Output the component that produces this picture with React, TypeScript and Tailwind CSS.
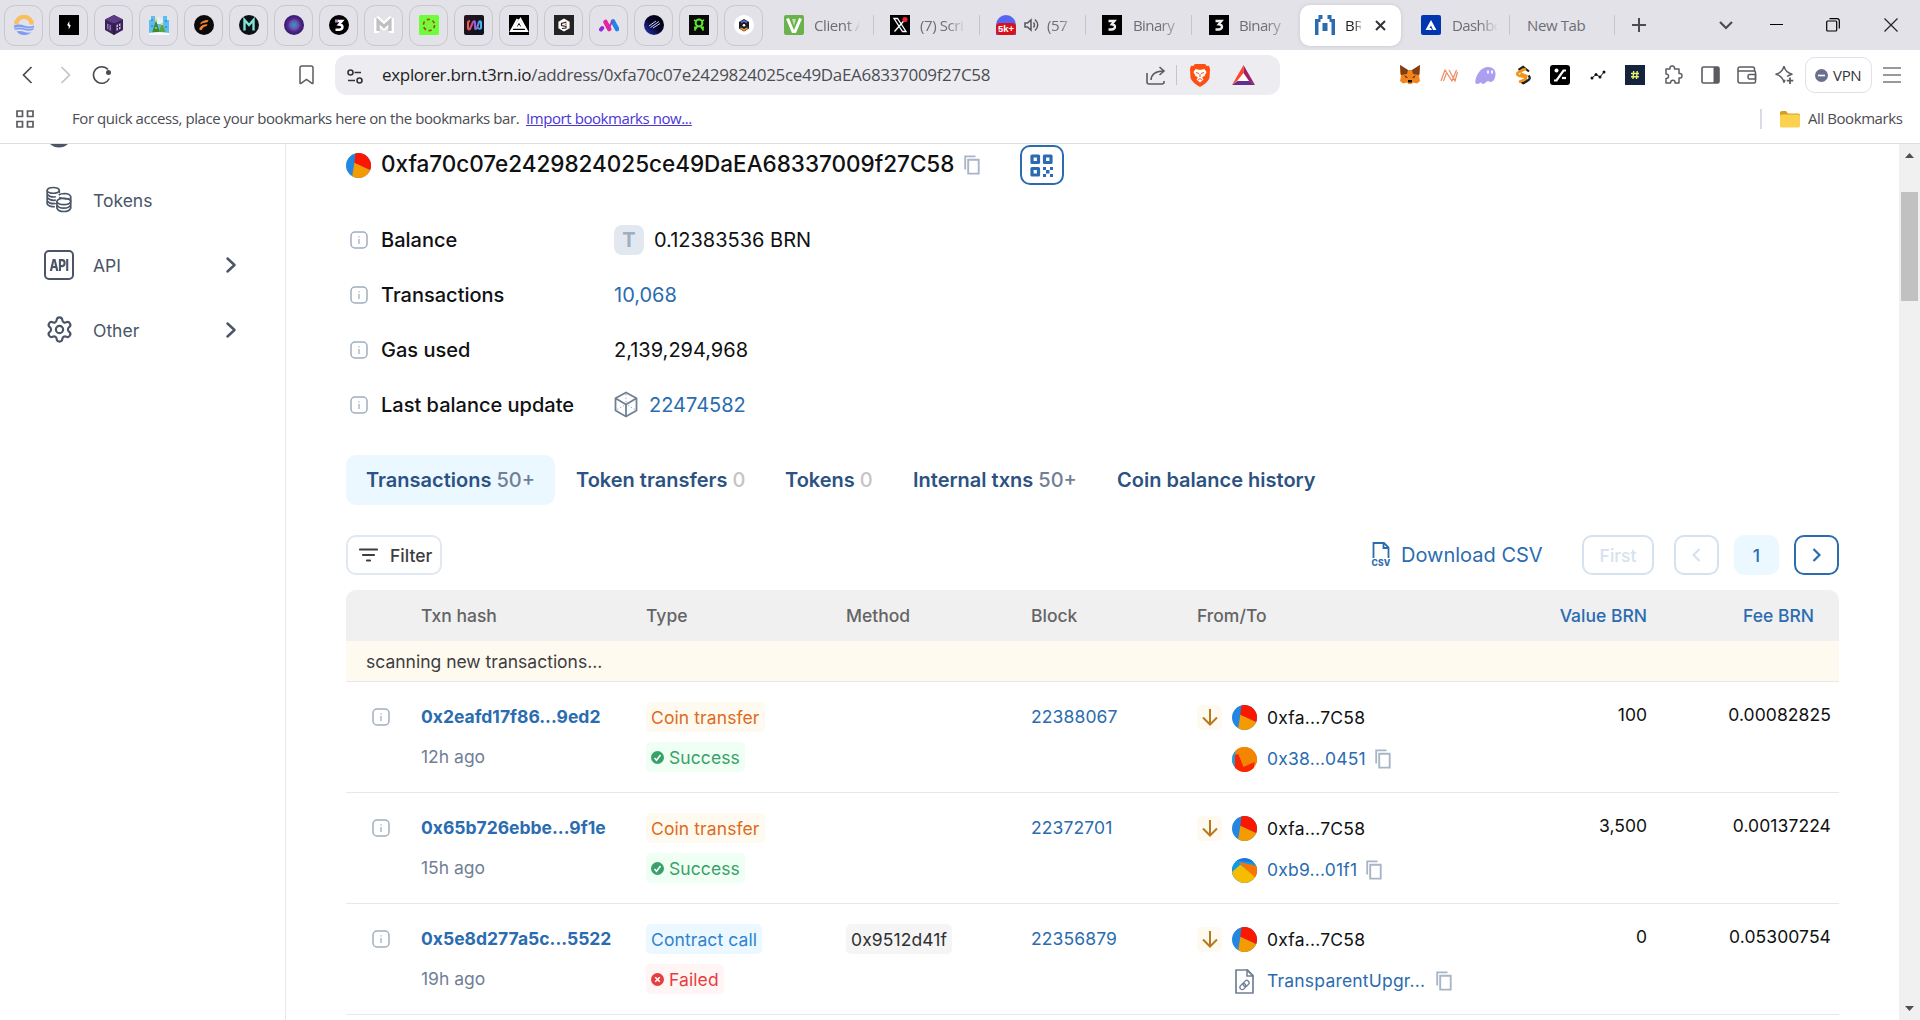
import React from "react";
import { Settings } from "lucide-react";

type P = { className?: string };

const Svg = ({ w, h, vb, children, className = "" }: { w: number; h: number; vb?: string; children: React.ReactNode; className?: string }) => (
  <svg width={w} height={h} viewBox={vb ?? `0 0 ${w} ${h}`} fill="none" className={`block shrink-0 ${className}`}>
    {children}
  </svg>
);

/* ---------- favicons of the pinned tabs ---------- */
const pinned: React.ReactNode[] = [
  <>
    <path d="M0 9.500a10 10 0 0 1 20 0h-4.500a5.500 5.500 0 0 0-11 0z" fill="#f7bf63" />
    <path d="M0 10.500q5-2 10 0t10 0q0 3-1 4.500-4.500 1.500-9 0t-9 0q-1-2-1-4.500zM2.500 16.500q4-1 8 .5t7 0A10 10 0 0 1 2.500 16.500z" fill="#7c9df3" />
    <path d="M1 13q4-1.600 9 0t9 0" stroke="#c3d2fb" strokeWidth="1" />
  </>,
  <>
    <path d="M0 0h20v20H0z" fill="#000" />
    <path d="M10.300 6v3.200l1.500 1.300L9.700 14.500v-3L8.200 10z" fill="#fff" />
  </>,
  <>
    <path d="M10 0l9 4.500v10.500L10 20 1 15V4.500z" fill="#3b2359" />
    <path d="M10 0l9 4.500-9 4-9-4z" fill="#5d3d85" />
    <path d="M10 8.500V20" stroke="#241238" />
    <path d="M12.500 10l4-1.800v5.600l-4 2z" fill="#c9bfe0" />
    <path d="M3 8.500l4 1.800v5.400l-4-2z" fill="#8b76b1" />
    <path d="M14.500 9v6M12.500 13l4-2M5 9.500v5" stroke="#3b2359" />
  </>,
  <>
    <path d="M0 18V5h2V1h4v4h8V1h4v4h2v13z" fill="#5dbdf3" />
    <path d="M6 5l4-3 4 3v4H6z" fill="#dff2fd" />
    <path d="M2 5h2M16 6h2M2 11h2M16 12h2" stroke="#2a8de0" strokeWidth="1.500" />
    <path d="M7 5l4 13H3z" fill="#3c8b2f" />
    <path d="M13 8l4 10H9.500z" fill="#5ba53a" />
    <circle cx="7" cy="5" r="1.200" fill="#ffd33c" />
    <circle cx="13" cy="9" r="1.200" fill="#ffd33c" />
    <circle cx="7" cy="13" r="1" fill="#f0c23c" />
    <path d="M0 18q10-2 20 0v2H0z" fill="#f4fafe" />
  </>,
  <>
    <circle cx="10" cy="10" r="10" fill="#0a0a0a" />
    <path d="M6 9.500Q7 5 14.500 5l-1 2.200Q8.500 7.500 6 9.500zM5.500 13q2-4 8-3.800l-1 2Q9 11.200 7.800 15H5.500z" fill="#f5822a" />
  </>,
  <>
    <circle cx="10" cy="10" r="10" fill="#0c1116" />
    <path d="M5.500 15.500V5l4.500 5 4.500-5v10.500" stroke="#7fe3d4" strokeWidth="2.400" />
  </>,
  <>
    <defs>
      <radialGradient id="orb">
        <stop offset="0" stopColor="#20a5bd" />
        <stop offset=".45" stopColor="#6b4fb0" />
        <stop offset=".6" stopColor="#5b2a93" />
        <stop offset="1" stopColor="#2c1a66" />
      </radialGradient>
    </defs>
    <circle cx="10" cy="10" r="10" fill="url(#orb)" />
  </>,
  <>
    <circle cx="10" cy="10" r="10" fill="#000" />
    <path d="M6 6h7l-3 3.500q3.500.2 3.500 2.600T10.200 14.800H6.500" stroke="#fff" strokeWidth="2.400" />
    <path d="M6 6h3" stroke="#c77be8" strokeWidth="2.400" />
  </>,
  <>
    <path d="M0 18V4l4-3 6 5 6-5 4 3v14h-5v-6l-5 4-5-4v6z" fill="#fff" />
    <path d="M4 16V6l6 5.500L16 6v10" stroke="#c0c0c4" strokeWidth="3.200" />
  </>,
  <>
    <rect width="20" height="20" rx="1.500" fill="#6dfd3a" />
    <circle cx="10" cy="10" r="5.600" stroke="#a44a12" strokeWidth="1.600" strokeDasharray="3.200 2.660" />
    <circle cx="10" cy="10" r="3" stroke="#9be03a" />
  </>,
  <>
    <defs>
      <linearGradient id="wave" x1="0" x2="1" y1="0" y2="0">
        <stop offset="0" stopColor="#f15a3c" />
        <stop offset=".45" stopColor="#a04fd0" />
        <stop offset="1" stopColor="#3fb8ee" />
      </linearGradient>
      <linearGradient id="wavebg" x1="0" x2="1" y1="0" y2="1">
        <stop offset="0" stopColor="#2b1420" />
        <stop offset="1" stopColor="#07131c" />
      </linearGradient>
    </defs>
    <rect width="20" height="20" rx="2" fill="url(#wavebg)" />
    <path d="M6 6q-2 0-2 2v5q0 2 2 1l3-7q2-2 2 1v5q0 2 2 0l2-6q1-1.500 2 0v6q-1 1.500-3 0" stroke="url(#wave)" strokeWidth="2.100" />
  </>,
  <>
    <path d="M0 0h20v20H0z" fill="#000" />
    <path d="M8.500 4L2 16h16L11.500 4 9.500 7.500M6 12.800l4-7 4 7z" stroke="#fff" strokeWidth="2" />
    <circle cx="10" cy="11.500" r="1.500" fill="#fff" />
  </>,
  <>
    <path d="M0 0h20v20H0z" fill="#242424" />
    <path d="M10 3.500l5.600 3.200v6.600L10 16.500l-5.600-3.200V6.700z" fill="#fff" />
    <path d="M12.500 7L7.500 8.500v2l4.500 1V13l-4 .5" stroke="#242424" strokeWidth="1.200" />
    <path d="M10.500 9l2-1v3z" fill="#f04e23" />
  </>,
  <>
    <path d="M2 14.500l1.200-1.500" stroke="#8a2be2" strokeWidth="4" strokeLinecap="round" />
    <path d="M6.500 7l3.700 7" stroke="#e6249c" strokeWidth="4.600" strokeLinecap="round" />
    <path d="M14 6.500l4 7.500" stroke="#1f86e8" strokeWidth="4.600" strokeLinecap="round" />
    <path d="M9 14l4.500-8" stroke="#c32bb0" strokeWidth="2" />
  </>,
  <>
    <defs>
      <linearGradient id="night" x1="0" x2="1" y1="1" y2="0">
        <stop offset="0" stopColor="#2b35c9" />
        <stop offset=".5" stopColor="#06062a" />
        <stop offset="1" stopColor="#000" />
      </linearGradient>
    </defs>
    <circle cx="10" cy="10" r="10" fill="url(#night)" />
    <path d="M5 11l7-5M6.500 12.500l8.500-6M9 13l7-4.500" stroke="#cdd2f5" strokeWidth="1" />
  </>,
  <>
    <path d="M0 0h20v20H0z" fill="#0a0a0a" />
    <circle cx="10" cy="8" r="3.400" stroke="#5fe62f" strokeWidth="2" />
    <path d="M5.500 15.500L8.500 11M14.500 15.500L11.500 11M5 5l2 1M15 5l-2 1M5 12.500h3M15 12.500h-3" stroke="#5fe62f" strokeWidth="1.800" />
  </>,
  <>
    <circle cx="10" cy="10" r="10" fill="#fff" />
    <path d="M10 4l5 3v6.500l-5 3-5-3V7z" fill="#1b1b28" />
    <path d="M7 7.500l3-1.700 3 1.700" stroke="#6a6fe0" strokeWidth="1.500" />
    <circle cx="10" cy="10.300" r="1.300" fill="#fff" />
    <path d="M6.500 13l3.500 2 3.500-2" stroke="#f39a1e" strokeWidth="1.600" />
  </>,
];

/* ---------- page icons ---------- */
const Info = ({ className = "" }: P) => (
  <Svg w={18} h={18} className={className}>
    <rect x="1" y="1" width="16" height="16" rx="4" stroke="#a0aec0" strokeWidth="1.500" />
    <path d="M9 8v5M9 5.200v1.200" stroke="#a0aec0" strokeWidth="1.300" />
  </Svg>
);

const Copy = ({ className = "" }: P) => (
  <Svg w={16} h={20} className={className}>
    <path d="M1.200 14.500V1.400H11.500" stroke="#a8b5c6" strokeWidth="1.800" />
    <path d="M4.200 4.800h10.500v13.800H4.200z" stroke="#a8b5c6" strokeWidth="1.900" />
  </Svg>
);

const Avatar = ({ kind, className = "" }: P & { kind: number }) => (
  <div className={`size-[25px] shrink-0 overflow-hidden rounded-full ${className}`}>
    <Svg w={25} h={25}>
      {kind === 0 && (
        <>
          <path d="M0 0h25v25H0z" fill="#2386e1" />
          <path d="M9.500 0H25v17.500L8.300 10z" fill="#fb1700" />
          <path d="M8.300 9.800L25 17.500V25H6z" fill="#f39b00" />
        </>
      )}
      {kind === 1 && (
        <>
          <path d="M0 0h25v25H0z" fill="#f28602" />
          <path d="M0 0h4v25H0z" fill="#18a5e8" />
          <path d="M3.500 0H25v16L11 20.500 3.500 7z" fill="#f28602" />
          <path d="M2.800 8l3.500-1L11.500 20l11-5-1 10H2.800z" fill="#fa2400" />
        </>
      )}
      {kind === 2 && (
        <>
          <path d="M0 0h25v25H0z" fill="#1f72e5" />
          <path d="M0 2l25 3v5L0 22z" fill="#0f9be8" />
          <path d="M7 4l18 4v15z" fill="#fc7400" />
          <path d="M0 14L8.500 6.500 25 21v4H0z" fill="#f5bc00" />
        </>
      )}
    </Svg>
  </div>
);

const Sep = ({ className = "" }: P) => <div className={`h-5 w-px shrink-0 bg-[#c5c5cb] ${className}`} />;

const Three = () => (
  <Svg w={20} h={20}>
    <path d="M0 0h20v20H0z" fill="#000" />
    <path d="M6.500 6h6L9.800 9.300q3.200.2 3.200 2.500t-3 2.700H6.500" stroke="#eee" strokeWidth="2.300" />
  </Svg>
);

const TabText = ({ children, className = "" }: P & { children: React.ReactNode }) => (
  <span className={`block shrink-0 overflow-hidden whitespace-nowrap text-[15px] leading-5 tracking-[-0.4px] text-[#6d6e74] ${className}`}>{children}</span>
);

function TabStrip() {
  return (
    <div className="flex h-[50px] shrink-0 items-center bg-[#e3e2e8] pl-1">
      <div className="flex w-[780px] shrink-0 gap-[6px]">
        {pinned.map((icon, i) => (
          <div key={i} className="flex h-[41px] w-[39px] shrink-0 items-center justify-center rounded-[11px] border border-[#c8c8cd]">
            <Svg w={20} h={20}>{icon}</Svg>
          </div>
        ))}
      </div>
      <div className="flex w-[89px] shrink-0 items-center">
        <Svg w={20} h={20}>
          <rect width="20" height="20" rx="2" fill="#69b24c" />
          <path d="M3.500 3.500L9 16.500h2l5.500-13" stroke="#fff" strokeWidth="3" />
          <path d="M8 4h4l-2 7z" fill="#b9e3a8" />
        </Svg>
        <TabText className="ml-[10px] w-[46px] [mask-image:linear-gradient(to_right,#000_70%,transparent)]">Client A</TabText>
      </div>
      <Sep />
      <div className="flex w-[105px] shrink-0 items-center pl-4">
        <Svg w={20} h={20}>
          <path d="M0 0h20v20H0z" fill="#000" />
          <path d="M4 3.500h3.500L16 16.500h-3.500zM15.500 4L4.500 16.500" stroke="#fff" strokeWidth="1.300" />
          <circle cx="15" cy="4.500" r="2.600" fill="#f4212e" />
        </Svg>
        <TabText className="ml-[10px] w-[46px] [mask-image:linear-gradient(to_right,#000_60%,transparent)]">(7) Scri</TabText>
      </div>
      <Sep />
      <div className="flex w-[105px] shrink-0 items-center pl-4">
        <div className="flex h-5 w-5 flex-col justify-end rounded-t-full bg-[#5865f2]">
          <span className="flex h-[12px] items-center justify-center rounded-[4px] bg-[#d8121a] font-['Liberation_Sans'] text-[9.5px] font-bold leading-none text-white">5k+</span>
        </div>
        <Svg w={15} h={14} className="ml-2">
          <path d="M1 5h2.500L7 2v10L3.500 9H1z" stroke="#55565c" strokeWidth="1.500" />
          <path d="M9.500 4.500q2 2.500 0 5M11 1.500q5.500 5.500 0 11" stroke="#55565c" strokeWidth="1.400" />
        </Svg>
        <TabText className="ml-[8px] w-[22px] [mask-image:linear-gradient(to_right,#000_60%,rgba(0,0,0,.4))]">(57</TabText>
      </div>
      <Sep />
      <div className="flex w-[105px] shrink-0 items-center pl-4">
        <Three />
        <TabText className="ml-[11px] w-[44px] tracking-[-0.6px] [mask-image:linear-gradient(to_right,#000_60%,rgba(0,0,0,.4))]">Binary</TabText>
      </div>
      <Sep />
      <div className="flex w-[108px] shrink-0 items-center pl-[17px]">
        <Three />
        <TabText className="ml-[10px] w-[44px] tracking-[-0.6px] [mask-image:linear-gradient(to_right,#000_60%,rgba(0,0,0,.4))]">Binary</TabText>
      </div>
      <div className="flex h-[41px] w-[101px] shrink-0 items-center rounded-[10px] bg-white pl-[15px] shadow-[0_0_4px_rgba(0,0,0,.12)]">
        <Svg w={20} h={20}>
          <path d="M0 4h3.500v16H0zM16.500 4H20v16h-3.500zM3.500 0h4v4h-4zM12.500 0h4v4h-4zM7.500 8h5v8h-5zM3.500 4h2v3h-2zM14.500 4h2v3h-2z" fill="#2b6cb0" />
        </Svg>
        <TabText className="ml-[10px] w-[16px] !text-[#222] [mask-image:linear-gradient(to_right,#000_50%,rgba(0,0,0,.3))]">BRN</TabText>
        <Svg w={11} h={11} className="ml-[14px]">
          <path d="M1 1l9 9M10 1l-9 9" stroke="#333439" strokeWidth="2" />
        </Svg>
      </div>
      <div className="flex w-[108px] shrink-0 items-center pl-[20px]">
        <Svg w={20} h={20}>
          <rect width="20" height="20" rx="2" fill="#0036b0" />
          <path d="M10 5l5.500 10H12l-2-4.500 -1.500 2.500h1.500l1 2H4.500z" fill="#fff" />
        </Svg>
        <TabText className="ml-[11px] w-[46px] tracking-[-0.6px] [mask-image:linear-gradient(to_right,#000_60%,transparent)]">Dashboard</TabText>
      </div>
      <Sep />
      <TabText className="w-[104px] pl-[17px]">New Tab</TabText>
      <Sep />
      <Svg w={14} h={14} className="ml-[17px]">
        <path d="M7 0v14M0 7h14" stroke="#4b4c52" strokeWidth="2" />
      </Svg>
      <Svg w={14} h={9} className="ml-[73px]">
        <path d="M1 1l6 6 6-6" stroke="#4b4c52" strokeWidth="2.200" />
      </Svg>
      <div className="mb-px ml-[37px] h-px w-[13px] shrink-0 bg-black" />
      <Svg w={14} h={14} className="ml-[43px]">
        <rect x=".7" y="3" width="10" height="10" rx="1" stroke="#000" strokeWidth="1.200" />
        <path d="M3.500.7H11q2.300 0 2.300 2.300v7.500" stroke="#000" strokeWidth="1.200" />
      </Svg>
      <Svg w={14} h={14} className="ml-[44px]">
        <path d="M.5.5l13 13M13.500.5l-13 13" stroke="#222" strokeWidth="1.200" />
      </Svg>
    </div>
  );
}

function Toolbar() {
  return (
    <div className="flex h-[50px] shrink-0 items-center bg-white pl-[22px]">
      <Svg w={11} h={18}><path d="M9.500 1L1.500 9l8 8" stroke="#4b4c52" strokeWidth="1.700" /></Svg>
      <Svg w={11} h={18} className="ml-[27px]"><path d="M1.500 1l8 8-8 8" stroke="#c4c4c8" strokeWidth="1.700" /></Svg>
      <Svg w={20} h={20} className="ml-[21px]">
        <path d="M17.300 13.500A8.300 8.300 0 1 1 16 4.500" stroke="#4b4c52" strokeWidth="1.600" />
        <circle cx="16.500" cy="7.500" r="2.500" fill="#4b4c52" />
      </Svg>
      <Svg w={15} h={20} className="ml-[187px]">
        <path d="M1 3q0-2 2-2h9q2 0 2 2v15q0 1-1 .4L7.500 14.500 2 18.400q-1 .6-1-.4z" stroke="#5b5c62" strokeWidth="1.500" />
      </Svg>
      <div className="ml-[21px] flex h-10 w-[945px] shrink-0 items-center rounded-[12px] bg-[#ededf1] pl-[12px] text-[17px]">
        <Svg w={17} h={15} className="mt-[3px]">
          <circle cx="3.500" cy="3.500" r="2.500" stroke="#333439" strokeWidth="1.600" />
          <path d="M7.500 3.500H14M1 11.500h7" stroke="#333439" strokeWidth="1.600" />
          <circle cx="12.500" cy="11.500" r="2.500" stroke="#333439" strokeWidth="1.600" />
        </Svg>
        <span className="-mt-px ml-[18px] w-[764px] whitespace-nowrap tracking-[-0.32px] text-[#4c4d53]">
          <span className="text-[#1d1e22]">explorer.brn.t3rn.io</span>/address/0xfa70c07e2429824025ce49DaEA68337009f27C58
        </span>
        <Svg w={20} h={19}>
          <path d="M1 7v9q0 2 2 2h13q2 0 2-2v-1" stroke="#5b5c62" strokeWidth="1.600" />
          <path d="M5 14q.5-8.500 12-9M13.500 1l4.500 4-4.500 4" stroke="#5b5c62" strokeWidth="1.600" />
        </Svg>
        <Sep className="ml-[10px]" />
        <Svg w={20} h={23} className="ml-[13px]">
          <path d="M5 0h10l2 2 2-.3 1 3.300-.5 9Q18 18.500 10 23 2 18.500.5 14L0 5l1-3.300L3 2z" fill="#fb4f14" />
          <path d="M5.500 5L10 6l4.500-1 2 3-2 4-2.500 1.500 1.500 2L10 18.500 6.500 15.500l1.500-2L5.500 12l-2-4z" fill="#fff" />
          <path d="M6 8.500l3 1M14 8.500l-3 1M10 10v3M8 16l2-1.500 2 1.500" stroke="#fb4f14" strokeWidth="1" />
        </Svg>
        <Svg w={23} h={20} className="ml-[22px]">
          <path d="M11.500 0L23 20H0z" fill="#fff" />
          <path d="M11.500 0v8L5 16 0 20z" fill="#ff4724" />
          <path d="M11.500 0L23 20l-6-4-5.500-8z" fill="#9e1f63" />
          <path d="M0 20l5.500-4h12L23 20z" fill="#662d91" />
        </Svg>
      </div>
      <Svg w={20} h={20} className="ml-[120px]">
        <path d="M0 0l8 5h4l8-5v8l-1 3 1 5-3 2.500-4-1-1.500 1.500h-3L7 17.500l-4 1L0 16l1-5-1-3z" fill="#f5841f" />
        <path d="M0 0l8 5-1 4-6 1zM20 0l-8 5 1 4 6 1z" fill="#7c4018" />
        <path d="M4 10l4 2.500-2 .5zM16 10l-4 2.500 2 .5z" fill="#46301f" />
        <path d="M8 15h4v2.500H8z" fill="#161616" />
      </Svg>
      <Svg w={18} h={13} className="ml-[20px]">
        <path d="M1 12L5 1l7 11L16.500 1M3.500 12L6.500 4M9 1l6 11L17.500 3" stroke="#f08a63" strokeWidth="1.200" />
      </Svg>
      <Svg w={21} h={17} className="ml-[17px]">
        <path d="M20.500 7c0 5-2.500 8-5 8-1.500 0-1.500-1-2.500-1-1.500 0-3 3-5 3-1.500 0-1-1.500-2-1.500s-2 1.500-4 1.500C0 17 0 14 1 11 3 5 7 0 13 0c5 0 7.500 3 7.500 7z" fill="#ab9ff2" />
        <path d="M13 3.500v3M17 3.500v3" stroke="#fff" strokeWidth="1.800" />
      </Svg>
      <Svg w={16} h={20} className="ml-[19px]">
        <path d="M3.500 5L8 1.800l6 4.700M12.500 15L8 18.200l-2-1.500" stroke="#222" strokeWidth="2.200" />
        <path d="M13.500 10.500q3 3-1 5.200L8 18.500" stroke="#222" strokeWidth="2.200" />
        <path d="M11 4L8 5 3 7.500q-2 1.800 1 3.300l6 1.200q2 1.200 0 2.500L4 17M5.500 8.500l7 3" stroke="#f0941c" strokeWidth="2.600" />
      </Svg>
      <Svg w={20} h={20} className="ml-[19px]">
        <rect width="20" height="20" rx="3" fill="#000" />
        <path d="M4 15.500h2.500l7-10H16" stroke="#fff" strokeWidth="2.200" />
        <circle cx="6.500" cy="5.500" r="2" fill="#fff" />
        <path d="M12 13h4" stroke="#fff" strokeWidth="2.200" />
      </Svg>
      <Svg w={16} h={10} className="ml-[20px]">
        <path d="M2 8l4-3.500 4 2.500L14 2" stroke="#111" strokeWidth="1" />
        <circle cx="2" cy="8" r="1.500" fill="#111" />
        <circle cx="6" cy="4.500" r="1.500" fill="#111" />
        <circle cx="10" cy="7" r="1.500" fill="#111" />
        <circle cx="14" cy="2" r="1.500" fill="#111" />
      </Svg>
      <Svg w={20} h={20} className="ml-[19px]">
        <path d="M0 0h20v20H0z" fill="#16233f" />
        <path d="M8.700 6l-.7 8M12.200 6l-.7 8M6 8.500h8M6 11.700h8" stroke="#e6f26a" strokeWidth="1.400" />
      </Svg>
      <Svg w={20} h={20} className="ml-[19px]">
        <path d="M2 4h4q-.5-3 2.200-3T10.500 4H15v4.500q3-.5 3 2.200T15 13v5h-4q.3-2.800-2-2.800T6.500 18H2v-4.500q2.500 0 2.500-2.300T2 9z" stroke="#5b5c62" strokeWidth="1.500" strokeLinejoin="round" />
      </Svg>
      <Svg w={19} h={18} className="ml-[17px]">
        <rect x="1" y="1" width="17" height="16" rx="1.500" stroke="#5b5c62" strokeWidth="1.600" />
        <path d="M12.500 1H18v16h-5.500z" fill="#5b5c62" />
      </Svg>
      <Svg w={20} h={18} className="ml-[17px]">
        <path d="M17.500 5V3q0-2-2-2H3Q1 1 1 3v12q0 2 2 2h14q1.500 0 1.500-1.500V6.500Q18.500 5 17 5H1" stroke="#5b5c62" strokeWidth="1.500" />
        <path d="M18.500 8.500h-6q-1.500 0-1.500 2.200t1.500 2.300h6z" stroke="#5b5c62" strokeWidth="1.500" />
      </Svg>
      <Svg w={20} h={20} className="ml-[18px]">
        <path d="M9 1.200q1.200 6 8 8-3.200.8-5 2.300M9 1.200Q7.500 7.500 1 9.300q6.300 1.700 8 8l1-2.500" stroke="#5b5c62" strokeWidth="1.500" strokeLinejoin="round" />
        <path d="M15 12.500v6.500M11.800 15.700h6.500" stroke="#5b5c62" strokeWidth="1.800" />
      </Svg>
      <div className="ml-[10px] flex h-9 w-[67px] shrink-0 items-center rounded-[10px] border border-[#e0e0e5] pl-[9px]">
        <Svg w={13} h={13}>
          <circle cx="6.500" cy="6.500" r="6.500" fill="#6b6f8e" />
          <path d="M3 6.500h7" stroke="#fff" strokeWidth="1.600" />
        </Svg>
        <span className="ml-[5px] whitespace-nowrap text-[15px] tracking-[-0.3px] text-[#333439]">VPN</span>
      </div>
      <Svg w={18} h={16} className="ml-[11px]">
        <path d="M0 1h18M0 8h18M0 15h18" stroke="#77787d" strokeWidth="1.700" />
      </Svg>
    </div>
  );
}

function BookmarksBar() {
  return (
    <div className="flex h-11 shrink-0 items-center border-b border-[#dedee2] bg-white pb-[5px] pl-4 text-[15px] tracking-[-0.43px] text-[#4b4c52]">
      <Svg w={18} h={18}>
        <path d="M1 1h5.500v5.500H1zM11.500 1H17v5.500h-5.500zM1 11.500h5.500V17H1zM11.500 11.500H17V17h-5.500z" stroke="#5b5c62" strokeWidth="1.700" />
      </Svg>
      <span className="-mt-[2px] ml-[38px] w-[454px] shrink-0 whitespace-nowrap">For quick access, place your bookmarks here on the bookmarks bar.</span>
      <span className="-mt-[2px] w-[1234px] shrink-0 whitespace-nowrap text-[#4a36d8] underline">Import bookmarks now...</span>
      <div className="h-5 w-[2px] shrink-0 bg-[#dcdbe3]" />
      <Svg w={20} h={17} className="ml-[18px]">
        <path d="M0 2q0-2 2-2h4l2 2.500h10q2 0 2 2V7H0z" fill="#d99d1c" />
        <path d="M1 3.500h17q2 0 2 2V15q0 1.500-2 1.500H2q-2 0-2-1.500V4.500z" fill="#fbd250" />
      </Svg>
      <span className="-mt-[2px] ml-[8px] whitespace-nowrap">All Bookmarks</span>
    </div>
  );
}

const NavRow = ({ icon, label, chevron }: { icon: React.ReactNode; label: string; chevron?: boolean }) => (
  <div className="flex h-[65px] items-center pl-[44px]">
    <div className="flex w-[30px] justify-center">{icon}</div>
    <span className="ml-[19px] w-[133px] pt-[3px] text-[17.5px] text-[#4a5568]">{label}</span>
    {chevron && (
      <Svg w={11} h={16}><path d="M1.500 1.500L8.500 8l-7 6.500" stroke="#4a5568" strokeWidth="2.400" strokeLinecap="round" strokeLinejoin="round" /></Svg>
    )}
  </div>
);

function Sidebar() {
  return (
    <aside className="w-[286px] shrink-0 border-r border-[#e8e8e8]">
      <div className="flex h-[23px] pl-[50px]">
        <Svg w={18} h={4}><path d="M0 0h18q-4 3.500-9 3.500T0 0z" fill="#4a5568" /></Svg>
      </div>
      <NavRow
        label="Tokens"
        icon={
          <Svg w={26} h={27} vb="0 0 27 27">
            <g stroke="#4a5568" strokeWidth="1.700">
              <ellipse cx="7.500" cy="4" rx="6.300" ry="3" />
              <path d="M1.200 4v14q1.500 3 8 3M13.800 4v3M1.200 8q2.500 3.500 9 2.700M1.200 11.500q2.500 3.500 9 2.700M1.200 15q2.500 3.500 9 2.700" />
              <ellipse cx="18.500" cy="15.500" rx="7.200" ry="3.300" />
              <path d="M11.300 15.500V22.500q1.500 3.500 7.200 3.500t7.200-3.500V10.500q-1-3-6.500-3.200-4 0-6 1.500M11.300 19q1.500 3.500 7.200 3.500t7.200-3.500M13.500 11.500q6 2 11 1" />
            </g>
          </Svg>
        }
      />
      <NavRow
        label="API"
        chevron
        icon={
          <div className="flex size-[30px] items-center justify-center rounded-[5px] border-2 border-[#4a5568] font-['Inter'] text-[#4a5568]">
            <span className="block h-[14px] scale-y-[1.3] pt-px text-[12px] font-extrabold leading-[14px] tracking-[-0.5px]">API</span>
          </div>
        }
      />
      <NavRow label="Other" chevron icon={<Settings size={29} strokeWidth={1.8} color="#4a5568" className="shrink-0" />} />
    </aside>
  );
}

const Detail = ({ label, children }: { label: string; children: React.ReactNode }) => (
  <div className="flex h-[55px] items-center pl-[4px] text-[20px]">
    <Info />
    <span className="ml-[13px] w-[233px] font-medium text-[#101112]">{label}</span>
    {children}
  </div>
);

const rows = [
  { hash: "0x2eafd17f86...9ed2", age: "12h ago", kind: "Coin transfer", ok: true, method: "", block: "22388067", to: "0x38...0451", av: 1, value: "100", fee: "0.00082825" },
  { hash: "0x65b726ebbe...9f1e", age: "15h ago", kind: "Coin transfer", ok: true, method: "", block: "22372701", to: "0xb9...01f1", av: 2, value: "3,500", fee: "0.00137224" },
  { hash: "0x5e8d277a5c...5522", age: "19h ago", kind: "Contract call", ok: false, method: "0x9512d41f", block: "22356879", to: "TransparentUpgr...", av: 3, value: "0", fee: "0.05300754" },
];

const cols = "grid grid-cols-[75px_225px_200px_185px_166px_450px_192px]";
const tag = "flex h-[30px] w-fit items-center whitespace-nowrap rounded-[5px] px-[5px] tracking-[0.1px]";

function Table() {
  return (
    <div className="mt-[15px] w-[1493px] text-[17.5px]">
      <div className={`${cols} h-[51px] items-center rounded-t-[10px] bg-[#f0f0f0] pt-[2px] font-medium text-[#646465]`}>
        <span />
        <span>Txn hash</span>
        <span>Type</span>
        <span>Method</span>
        <span>Block</span>
        <span className="flex justify-between">From/To<span className="text-[#2b6cb0]">Value BRN</span></span>
        <span className="pr-[25px] text-right text-[#2b6cb0]">Fee BRN</span>
      </div>
      <div className="flex h-[41px] items-center border-b border-[#e8e8e9] bg-[#fffaef] pl-[20px] pt-[2px] text-[#3c3d3f]">scanning new transactions...</div>
      {rows.map((r) => (
        <div key={r.hash} className={`${cols} h-[111px] border-b border-[#e8e8e9] pt-[20px] leading-[30px]`}>
          <div className="pl-[26px] pt-[6px]"><Info /></div>
          <div>
            <div className="font-bold text-[#2b6cb0]">{r.hash}</div>
            <div className="mt-[10px] text-[#718096]">{r.age}</div>
          </div>
          <div className="flex flex-col gap-[10px]">
            <div className={r.ok ? `${tag} bg-[#fffaf0] text-[#dd6b20]` : `${tag} bg-[#ebf8ff] text-[#3182ce]`}>
              <span className="pt-[2px]">{r.kind}</span>
            </div>
            <div className={r.ok ? `${tag} bg-[#f0fff4] text-[#38a169]` : `${tag} bg-[#fff5f5] text-[#e53e3e]`}>
              <Svg w={13} h={13} className="mr-[5px]">
                <circle cx="6.500" cy="6.500" r="6.500" fill={r.ok ? "#38a169" : "#e53e3e"} />
                <path d={r.ok ? "M3.500 7l2 2.200L9.500 4" : "M4.200 4.200l4.600 4.600M8.800 4.200L4.200 8.800"} stroke="#fff" strokeWidth="1.600" />
              </Svg>
              <span className="pt-[2px]">{r.ok ? "Success" : "Failed"}</span>
            </div>
          </div>
          <div>
            {r.method && (
              <div className={`${tag} bg-[#f5f5f6] text-[#2f3032]`}>
                <span className="pt-[2px]">{r.method}</span>
              </div>
            )}
          </div>
          <div className="tracking-[0.12px] text-[#2b6cb0]">{r.block}</div>
          <div className="flex justify-between">
            <div className="tracking-[0.2px]">
              <div className="flex h-[31px] items-center">
                <div className="flex size-[25px] items-center justify-center rounded-[5px] bg-[#fffaf0]">
                  <Svg w={16} h={17}><path d="M8 0v15M1 8.500l7 7 7-7" stroke="#b7791f" strokeWidth="2" /></Svg>
                </div>
                <Avatar kind={0} className="ml-[10px]" />
                <span className="ml-[10px] text-[#101112]">0xfa...7C58</span>
              </div>
              <div className="mt-[11px] flex h-[31px] items-center pl-[35px]">
                {r.av === 3 ? (
                  <Svg w={19} h={25} className="ml-[3px] mr-[3px]">
                    <path d="M1 1h11.500L18 6.500V24H1z" stroke="#718096" strokeWidth="1.700" strokeLinejoin="round" />
                    <path d="M12 1v6h6z" stroke="#718096" strokeWidth="1.500" />
                    <g stroke="#718096" strokeWidth="1.300" transform="rotate(-45 9.500 16)">
                      <rect x="4" y="13.700" width="6.500" height="4.600" rx="2.300" />
                      <rect x="8.500" y="13.700" width="6.500" height="4.600" rx="2.300" />
                    </g>
                  </Svg>
                ) : (
                  <Avatar kind={r.av} />
                )}
                <span className="-mt-[2px] ml-[10px] whitespace-nowrap text-[#2b6cb0]">{r.to}</span>
                <Copy className={r.av === 3 ? "-mt-px ml-[11px]" : "-mt-px ml-[9px]"} />
              </div>
            </div>
            <span className="-mt-[2px] text-[#101112]">{r.value}</span>
          </div>
          <div className="-mt-[2px] pr-[8px] text-right tracking-[0.08px] text-[#101112]">{r.fee}</div>
        </div>
      ))}
    </div>
  );
}

function Main() {
  return (
    <main className="w-[1613px] shrink-0 overflow-hidden pl-[60px]">
      <div className="flex h-[42px] items-center">
        <Avatar kind={0} />
        <h1 className="-mt-[2px] ml-[10px] w-[572px] whitespace-nowrap text-[22.5px] font-medium leading-none tracking-[-0.02px] text-[#101112]">0xfa70c07e2429824025ce49DaEA68337009f27C58</h1>
        <Copy className="ml-[11px]" />
        <div className="ml-[40px] flex h-10 w-11 items-center justify-center rounded-[10px] border-2 border-[#2b6cb0]">
          <Svg w={23} h={23} className="-ml-px">
            <path d="M2 2h6.500v6.500H2zM14.500 2H21v6.500h-6.500zM2 14.500h6.500V21H2z" stroke="#2b6cb0" strokeWidth="3.200" strokeLinejoin="round" />
            <path d="M13 13h3v3h-3zM16 16h3.500v3.500H16zM20 13h3v3h-3zM13 20h3v3h-3zM20 20h3v3h-3z" fill="#2b6cb0" />
          </Svg>
        </div>
      </div>
      <div className="mt-[26px]">
        <Detail label="Balance">
          <div className="flex size-[30px] items-center justify-center rounded-[8px] bg-[#e2e8f0] text-[20px] font-bold text-[#a0aec0]">T</div>
          <span className="ml-[10px] text-[#101112]">0.12383536 BRN</span>
        </Detail>
        <Detail label="Transactions"><span className="text-[#2b6cb0]">10,068</span></Detail>
        <Detail label="Gas used"><span className="text-[#101112]">2,139,294,968</span></Detail>
        <Detail label="Last balance update">
          <Svg w={24} h={27}>
            <path d="M12 1.500l10.500 5.700v12.300L12 25.500 1.500 19.500V7.200zM1.500 7.200L12 13.500l10.500-6.300M12 13.500v12" stroke="#718096" strokeWidth="1.800" strokeLinejoin="round" />
            <path d="M12 3v9M3 18.500l7-4M21 18.500l-7-4" stroke="#a0aec0" strokeDasharray="1.500 2" />
          </Svg>
          <span className="ml-[11px] text-[#2b6cb0]">22474582</span>
        </Detail>
      </div>
      <div className="mt-[23px] flex h-[50px] items-center whitespace-nowrap text-[20px] font-semibold text-[#2c5282]">
        <div className="flex h-full w-[209px] items-center rounded-[10px] bg-[#ebf8ff] pl-[20px]">Transactions&nbsp;<span className="font-medium text-[#718096]">50+</span></div>
        <div className="w-[209px] pl-[21px]">Token transfers <span className="font-medium text-[#c4c4c6]">0</span></div>
        <div className="w-[128px] pl-[21px]">Tokens <span className="font-medium text-[#c4c4c6]">0</span></div>
        <div className="w-[204px] pl-[21px]">Internal txns <span className="font-medium text-[#718096]">50+</span></div>
        <div className="pl-[21px]">Coin balance history</div>
      </div>
      <div className="mt-[30px] flex h-10 w-[1493px] items-center text-[17.5px]">
        <div className="flex h-10 w-24 shrink-0 items-center rounded-[10px] border-2 border-[#e2e8f0] pl-[11px] font-medium text-[#3c3d3f]">
          <Svg w={19} h={14}><path d="M1 1.500h17M4 7h11M8 12.500h3" stroke="#3c3d3f" strokeWidth="2.200" strokeLinecap="round" /></Svg>
          <span className="ml-[12px] pt-[2px]">Filter</span>
        </div>
        <div className="ml-[930px] flex w-[18px] shrink-0 flex-col items-center text-[#2b6cb0]">
          <Svg w={18} h={17}><path d="M1.500 16V1h10.500l4.500 4.500V16M11.500 1v5h5" stroke="#2b6cb0" strokeWidth="1.800" /></Svg>
          <span className="h-[9px] text-[8.5px] font-extrabold leading-[9px] tracking-[0.2px]">CSV</span>
        </div>
        <span className="ml-[11px] w-[181px] shrink-0 whitespace-nowrap text-[20px] text-[#2b6cb0]">Download CSV</span>
        <div className="flex h-10 w-[72px] shrink-0 items-center justify-center rounded-[10px] border-2 border-[#d5e2ef] pt-[2px] font-medium text-[#d5e2ef]">First</div>
        <div className="ml-5 flex h-10 w-[45px] shrink-0 items-center justify-center rounded-[10px] border-2 border-[#d5e2ef]">
          <Svg w={9} h={14}><path d="M7.500 1L1.500 7l6 6" stroke="#d5e2ef" strokeWidth="2.200" /></Svg>
        </div>
        <div className="ml-[15px] flex h-10 w-[45px] shrink-0 items-center justify-center rounded-[10px] bg-[#ebf8ff] pt-[2px] font-medium text-[#2b6cb0]">1</div>
        <div className="ml-[15px] flex h-10 w-[45px] shrink-0 items-center justify-center rounded-[10px] border-2 border-[#2b6cb0]">
          <Svg w={9} h={14}><path d="M1.500 1l6 6-6 6" stroke="#2b6cb0" strokeWidth="2.200" /></Svg>
        </div>
      </div>
      <Table />
    </main>
  );
}

export default function App() {
  return (
    <div className="flex h-[1020px] w-[1920px] flex-col overflow-hidden bg-white font-['Inter',sans-serif]">
      <header className="shrink-0 font-['Open_Sans',sans-serif]">
        <TabStrip />
        <Toolbar />
        <BookmarksBar />
      </header>
      <div className="flex min-h-0 flex-1">
        <Sidebar />
        <Main />
        <div className="flex w-[21px] shrink-0 flex-col items-center bg-[#f0f0f0] py-[9px]">
          <Svg w={9} h={5}><path d="M4.500 0L9 5H0z" fill="#505050" /></Svg>
          <div className="mt-[34px] h-[109px] w-[17px] bg-[#c1c1c1]" />
          <Svg w={9} h={5} className="mt-auto"><path d="M4.500 5L0 0h9z" fill="#505050" /></Svg>
        </div>
      </div>
    </div>
  );
}
